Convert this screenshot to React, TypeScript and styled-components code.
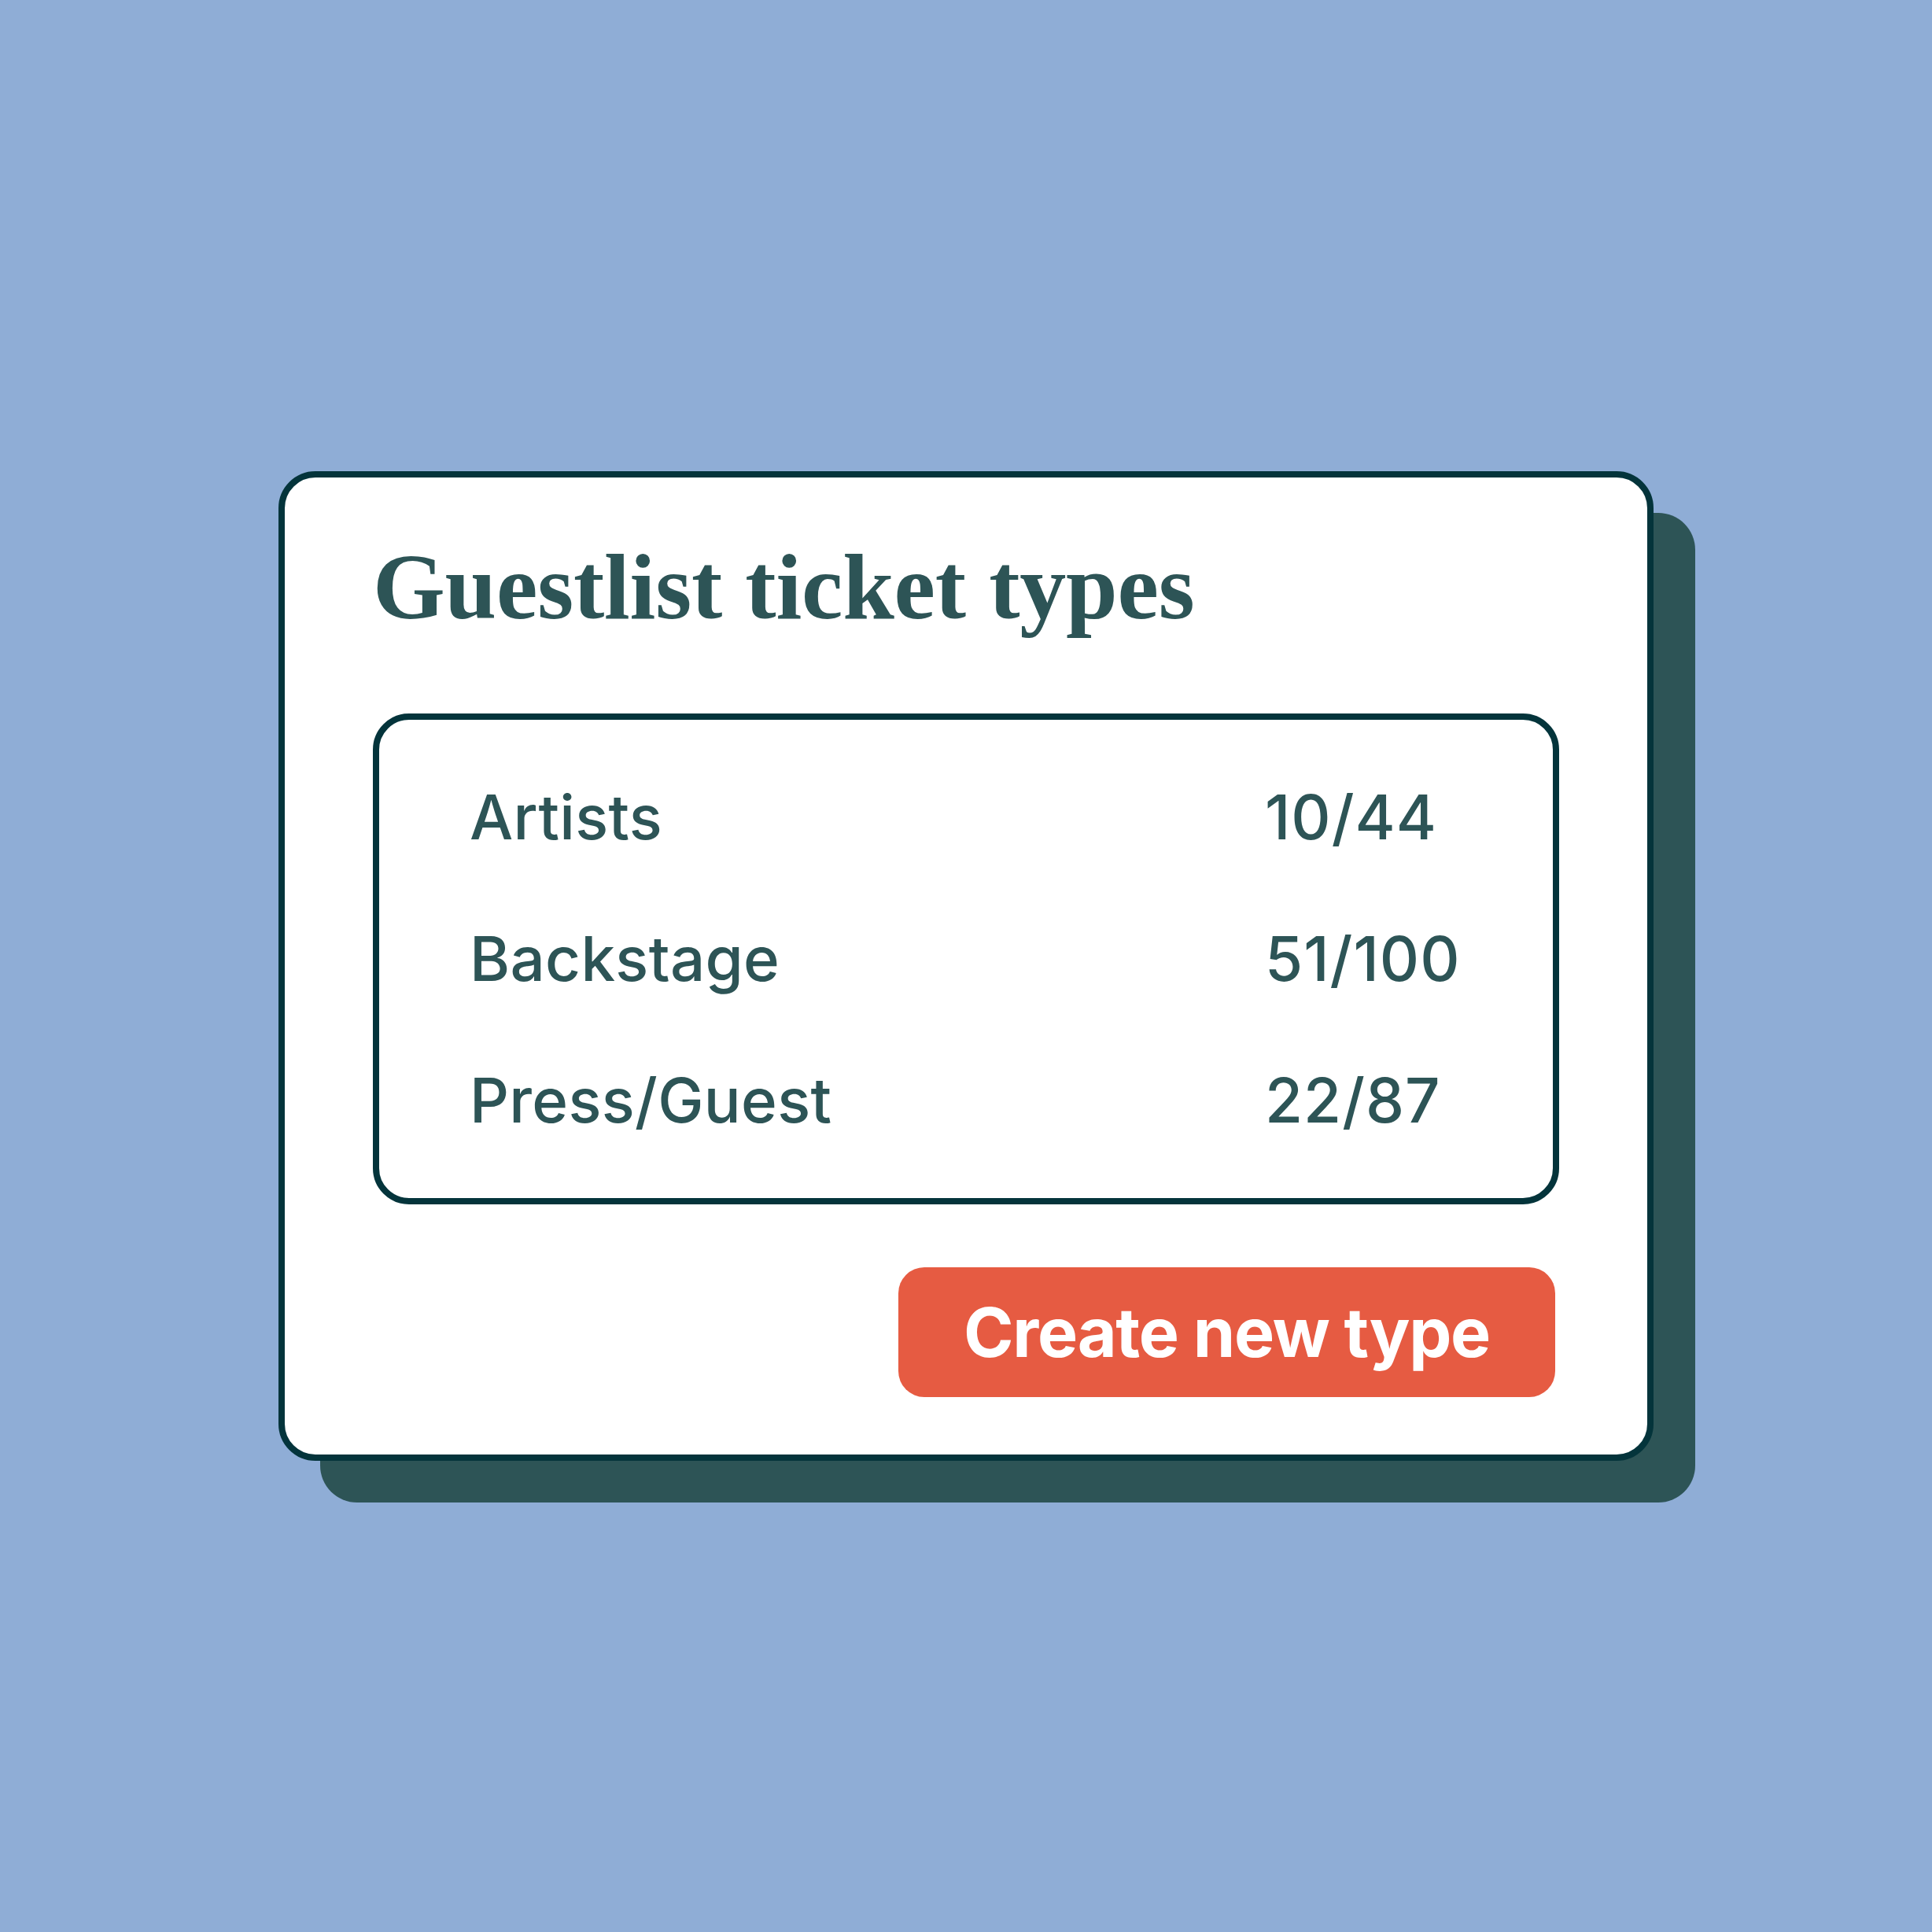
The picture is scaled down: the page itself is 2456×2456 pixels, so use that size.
import styled, { createGlobalStyle } from "styled-components";

const GlobalStyle = createGlobalStyle`
  html, body {
    margin: 0;
    padding: 0;
    background: #8fadd6;
  }
`;

type TicketType = {
  name: string;
  used: number;
  total: number;
};

const ticketTypes: TicketType[] = [
  { name: "Artists", used: 10, total: 44 },
  { name: "Backstage", used: 51, total: 100 },
  { name: "Press/Guest", used: 22, total: 87 },
];

const App = (): JSX.Element => {
  return (
    <>
      <GlobalStyle />
      <Page>
        <Card>
          <Title>Guestlist ticket types</Title>

          <TypeList>
            {ticketTypes.map(type => (
              <TypeRow key={type.name}>
                <TypeName>{type.name}</TypeName>
                <TypeCount>
                  {type.used}/{type.total}
                </TypeCount>
              </TypeRow>
            ))}
          </TypeList>

          <Actions>
            <CreateButton type="button">Create new type</CreateButton>
          </Actions>
        </Card>
      </Page>
    </>
  );
};

export default App;

const Page = styled.main`
  width: 2456px;
  height: 2456px;
  display: flex;
  align-items: center;
  justify-content: center;
  background: #8fadd6;
`;

const Card = styled.section`
  box-sizing: border-box;
  width: 1748px;
  height: 1258px;
  padding: 81px 112px 0;
  background: #ffffff;
  border: 8px solid #04343b;
  border-radius: 47px;
  box-shadow: 53px 53px 0 0 #2d5456;
`;

const Title = styled.h1`
  margin: 0 0 101px;
  font-family: "Liberation Serif", "DejaVu Serif", serif;
  font-weight: 700;
  font-size: 118px;
  line-height: 118px;
  color: #2d5456;
  letter-spacing: -0.2px;
`;

const TypeList = styled.div`
  box-sizing: border-box;
  height: 624px;
  padding: 34px 115px;
  border: 8px solid #04343b;
  border-radius: 46px;
`;

const TypeRow = styled.div`
  display: grid;
  grid-template-columns: 1011px 1fr;
  height: 180px;
  align-items: center;
`;

const TypeName = styled.span`
  font-family: Inter, "Liberation Sans", sans-serif;
  font-weight: 500;
  font-size: 78px;
  line-height: 180px;
  letter-spacing: 0.3px;
  color: #2d5456;
`;

const TypeCount = styled(TypeName)`
  letter-spacing: 1px;
`;

const Actions = styled.div`
  display: flex;
  justify-content: flex-end;
  margin-top: 80px;
  padding-right: 5px;
`;

const CreateButton = styled.button`
  width: 835px;
  height: 165px;
  border: none;
  border-radius: 33px;
  background: #e65b42;
  color: #ffffff;
  font-family: Inter, "Liberation Sans", sans-serif;
  font-weight: 700;
  font-size: 86px;
  line-height: 1;
  letter-spacing: -1.3px;
  cursor: pointer;
`;
